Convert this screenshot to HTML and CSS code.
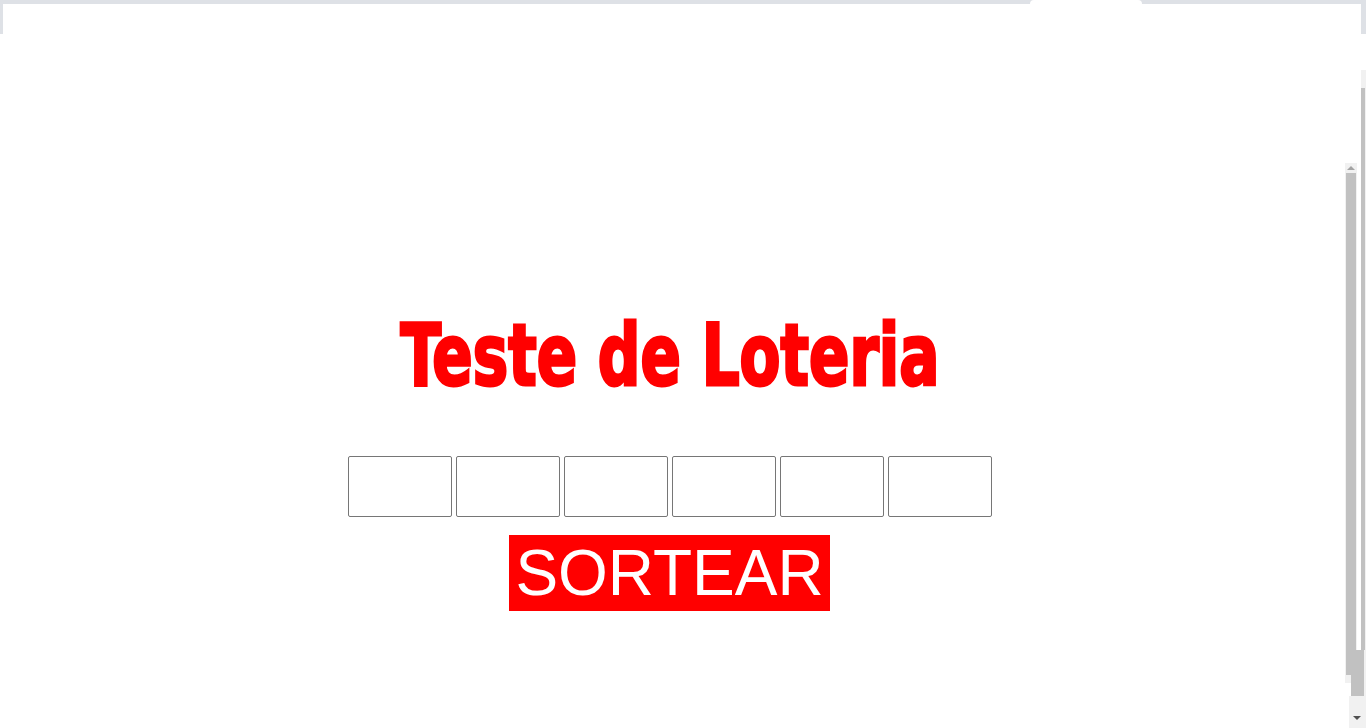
FILE: index.html
```html
<!DOCTYPE html>
<html lang="pt">
<head>
<meta charset="utf-8">
<title>Teste de Loteria</title>
<link rel="stylesheet" href="styles.css">
</head>
<body>
<div class="chrome-top"></div>
<div class="chrome-tab"></div>
<div class="chrome-left"></div>
<div class="chrome-right"></div>
<div class="outer-track"></div>
<div class="outer-thumb"></div>
<div class="inner-bar">
  <div class="arrow-up"></div>
  <div class="inner-thumb"></div>
</div>
<div class="bottom-block"></div>
<div class="bottom-track"><div class="arrow-down"></div></div>

<main class="page">
  <h1 class="title">Teste de Loteria</h1>
  <div class="boxes">
    <input class="box" type="text">
    <input class="box" type="text">
    <input class="box" type="text">
    <input class="box" type="text">
    <input class="box" type="text">
    <input class="box" type="text">
  </div>
  <button class="draw" type="button">SORTEAR</button>
</main>
</body>
</html>
```

FILE: styles.css
```css
html, body {
  margin: 0;
  padding: 0;
  background: #ffffff;
  overflow: hidden;
  height: 728px;
}

.page {
  width: 1339px;
  display: flex;
  flex-direction: column;
  align-items: center;
  padding-top: 311px;
}

.title {
  margin: 0;
  font-family: Impact, "DejaVu Sans Condensed", "DejaVu Sans", sans-serif;
  font-weight: bold;
  font-stretch: condensed;
  font-size: 86px;
  line-height: 88px;
  color: #ff0000;
  -webkit-text-stroke: 3px #ff0000;
  white-space: nowrap;
  transform: scaleX(0.77);
}

.boxes {
  display: flex;
  gap: 4px;
  margin-top: 57px;
}

.box {
  box-sizing: border-box;
  width: 104px;
  height: 61px;
  margin: 0;
  border: 1px solid #767676;
  border-radius: 2px;
  padding: 1px 2px;
  background: #ffffff;
}

.draw {
  margin-top: 18px;
  font-family: "Liberation Sans", Arial, sans-serif;
  font-size: 64px;
  color: #ffffff;
  background: #ff0000;
  border: none;
  padding: 1px 6px;
}

/* surrounding window chrome */
.chrome-top {
  position: absolute;
  left: 0;
  top: 0;
  width: 1366px;
  height: 4px;
  background: #dee1e6;
}
.chrome-tab {
  position: absolute;
  left: 1030px;
  top: 0;
  width: 112px;
  height: 4px;
  background: #ffffff;
  border-radius: 6px 6px 0 0;
}
.chrome-left {
  position: absolute;
  left: 0;
  top: 0;
  width: 3px;
  height: 34px;
  background: #dee1e6;
}
.chrome-right {
  position: absolute;
  left: 1361px;
  top: 0;
  width: 5px;
  height: 34px;
  background: #dee1e6;
}
.outer-track {
  position: absolute;
  left: 1361px;
  top: 70px;
  width: 5px;
  height: 658px;
  background: #f1f1f1;
}
.outer-thumb {
  position: absolute;
  left: 1361px;
  top: 88px;
  width: 4px;
  height: 562px;
  background: #c1c1c1;
}
.inner-bar {
  position: absolute;
  left: 1345px;
  top: 163px;
  width: 12px;
  height: 520px;
  background: #f1f1f1;
}
.arrow-up {
  margin: 3px auto 0;
  width: 0;
  height: 0;
  border-left: 4px solid transparent;
  border-right: 4px solid transparent;
  border-bottom: 4px solid #a3a3a3;
}
.inner-thumb {
  margin: 3px 0 0 1px;
  width: 10px;
  height: 502px;
  background: #c1c1c1;
}
.bottom-block {
  position: absolute;
  left: 1351px;
  top: 650px;
  width: 13px;
  height: 46px;
  background: #c1c1c1;
}
.bottom-track {
  position: absolute;
  left: 1349px;
  top: 696px;
  width: 15px;
  height: 32px;
  background: #f1f1f1;
}
.arrow-down {
  margin: 20px auto 0;
  width: 0;
  height: 0;
  border-left: 4px solid transparent;
  border-right: 4px solid transparent;
  border-top: 4px solid #505050;
}
```
